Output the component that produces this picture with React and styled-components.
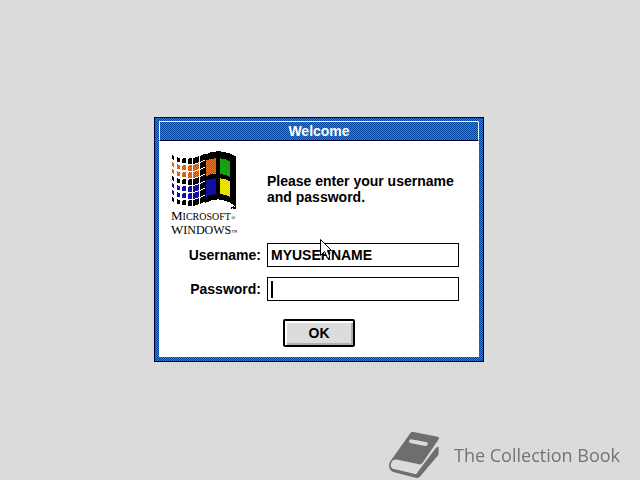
import React, { useState } from 'react';
import styled, { createGlobalStyle } from 'styled-components';

// columns of the flag's dotted tail: left edge, width, top edge, block height, slant
const tail = [
  { x: 20, w: 7, y: 21, h: 12, slant: 3 },
  { x: 36, w: 9, y: 28, h: 13, slant: 2 },
  { x: 52, w: 12, y: 32, h: 14, slant: -2 },
  { x: 68, w: 14, y: 33, h: 17, slant: -4 },
  { x: 85, w: 16, y: 30, h: 18, slant: -5 },
  { x: 104, w: 17, y: 24, h: 18, slant: -7 },
];

const tailRows = ['#000', 'orange', 'orange', '#000', 'blue', 'blue', '#000'];

const tailFill = (row, column) => {
  const color = tailRows[row];
  if (color === '#000' || column === 5) return '#000';
  return color === 'orange' ? 'url(#flag-orange)' : '#1010a0';
};

const WindowsFlag = () => (
  <FlagSvg viewBox="18 9 204 174" aria-hidden="true">
    <defs>
      <pattern id="flag-orange" width="6" height="6" patternUnits="userSpaceOnUse">
        <rect width="6" height="6" fill="#e87830" />
        <path fill="#c84c00" d="M0 0h3v3h-3zM3 3h3v3h-3z" />
      </pattern>
      <pattern id="flag-yellow" width="6" height="6" patternUnits="userSpaceOnUse">
        <rect width="6" height="6" fill="#f8f000" />
        <path fill="#d8c820" d="M0 0h3v3h-3zM3 3h3v3h-3z" />
      </pattern>
    </defs>
    {tail.map((col, i) =>
      tailRows.map((_, row) => (
        <path
          key={`${i}-${row}`}
          fill={tailFill(row, i)}
          d={`M${col.x} ${col.y + row * 21}l${col.w} ${col.slant}v${col.h}l${-col.w} ${-col.slant}z`}
        />
      ))
    )}
    <path d="M121 19C137 10 160 8 176 12C190 14 202 19 213 25V176C202 166 189 160 176 157C156 151 138 155 121 165Z" />
    <path fill="url(#flag-orange)" d="M122 38C132 33 142 31 152 31V78C141 77 132 80 122 85Z" />
    <path fill="#14a010" d="M164 31C176 32 186 35 196 41V87C186 81 176 78 164 78Z" />
    <path fill="#1010a0" d="M122 98C132 92 142 91 152 91V139C141 139 132 142 122 147Z" />
    <path fill="url(#flag-yellow)" d="M164 91C176 92 186 95 196 101V147C186 141 176 139 164 138Z" />
    <path fill="none" stroke="#000" strokeWidth="3" d="M197 178h6M200 178v5M206 183v-6l3 3l3 -3v6" />
  </FlagSvg>
);

const BookIcon = () => (
  <BookSvg viewBox="24 18 156 144" aria-hidden="true">
    <path
      fill="#6e6e6e"
      fillRule="evenodd"
      d="M93 22Q96 19 101 21L173 35Q180 37 176 43L129 112Q125 119 117 118L53 104Q38 102 34 113C30 123 33 129 42 132L108 148L167 70Q171 64 176 66V82Q177 87 173 92L121 154Q117 160 109 159L43 142C29 138 24 127 29 112ZM93 43Q86 44 87 50Q88 54 94 55L135 63Q143 63 144 57Q144 52 138 51Z"
    />
  </BookSvg>
);

const App = () => {
  const [username, setUsername] = useState('MYUSERNAME');
  const [password, setPassword] = useState('');

  return (
    <Desktop>
      <GlobalStyle />
      <Dialog role="dialog" aria-labelledby="dialog-title">
        <TitleBar id="dialog-title">Welcome</TitleBar>
        <LoginForm onSubmit={(e) => e.preventDefault()}>
          <Brand>
            <WindowsFlag />
            <BrandLine>MICROSOFT<Mark>®</Mark></BrandLine>
            <BrandLine $large>WINDOWS<Mark>™</Mark></BrandLine>
          </Brand>
          <Message>Please enter your username and password.</Message>

          <Label htmlFor="username">Username:</Label>
          <Field>
            <Input
              id="username"
              value={username}
              onChange={(e) => setUsername(e.target.value)}
            />
            <Pointer viewBox="0 0 12 20" aria-hidden="true">
              <path d="M.5 .5V16.500L4.500 12.500L7.500 19H9.500V17L7.500 11.500H11.500Z" fill="#fff" stroke="#000" />
            </Pointer>
          </Field>

          <Label htmlFor="password">Password:</Label>
          <Field>
            <Input
              id="password"
              type="password"
              value={password}
              onChange={(e) => setPassword(e.target.value)}
            />
            {password === '' && <Caret />}
          </Field>

          <Actions>
            <Button type="submit">OK</Button>
          </Actions>
        </LoginForm>
      </Dialog>
      <Watermark>
        <BookIcon />
        The Collection Book
      </Watermark>
    </Desktop>
  );
};

const GlobalStyle = createGlobalStyle`
  * {
    box-sizing: border-box;
  }

  body {
    margin: 0;
    background: #dbdbdb;
    color: #000;
    font: bold 14px/16px 'Liberation Sans', Arial, sans-serif;
  }
`;

const Desktop = styled.main`
  display: flex;
  align-items: center;
  justify-content: center;
  min-height: 100vh;
  padding: 0 2px 2px 0;
`;

const Dialog = styled.section`
  width: 100%;
  max-width: 330px;
  padding: 3px 4px 4px;
  border: 1px solid #000030;
  background: repeating-conic-gradient(#0044a0 0 25%, #2a88d0 0 50%) 0 0 / 2px 2px;
`;

const TitleBar = styled.h1`
  margin: 0;
  height: 20px;
  border: 1px solid #e0f8ff;
  border-bottom-color: #000030;
  color: #fff;
  font-size: 14px;
  line-height: 18px;
  text-align: center;
`;

const LoginForm = styled.form`
  display: grid;
  grid-template-columns: 102px 1fr;
  gap: 10px 6px;
  padding: 10px 20px 10px 0;
  background: #fff;
`;

const Brand = styled.div`
  height: 82px;
  padding-left: 12px;
  font-family: 'Liberation Serif', 'Times New Roman', serif;
  font-weight: normal;
`;

const FlagSvg = styled.svg`
  display: block;
  width: 68px;
  height: 58px;
  shape-rendering: crispEdges;
`;

const BrandLine = styled.div`
  height: 14px;
  font-size: ${({ $large }) => ($large ? '12px' : '10px')};
  line-height: 14px;
  white-space: nowrap;

  &::first-letter {
    font-size: 13px;
  }
`;

const Mark = styled.span`
  font-size: 6px;
  line-height: 6px;
`;

const Message = styled.p`
  margin: 0;
  padding-top: 22px;
`;

const Label = styled.label`
  align-self: center;
  text-align: right;
`;

const Field = styled.div`
  position: relative;
`;

const Input = styled.input`
  display: block;
  width: 100%;
  height: 24px;
  padding: 0 3px;
  border: 1px solid #000;
  border-radius: 0;
  outline: none;
  background: #fff;
  color: inherit;
  font: inherit;
`;

const Caret = styled.span`
  position: absolute;
  top: 4px;
  left: 4px;
  width: 2px;
  height: 17px;
  background: #000;
  pointer-events: none;
`;

const Pointer = styled.svg`
  position: absolute;
  top: -4px;
  left: 53px;
  width: 12px;
  height: 20px;
  pointer-events: none;
`;

const Actions = styled.div`
  display: flex;
  grid-column: 1 / -1;
  justify-content: center;
  padding: 8px 0 0 20px;
`;

const Button = styled.button`
  width: 72px;
  height: 28px;
  padding: 0;
  border: 2px solid #000;
  border-radius: 2px;
  background: #dcdcdc;
  box-shadow: inset 2px 2px #fff, inset -2px -2px #b0b0b0;
  color: inherit;
  font: inherit;
`;

const Watermark = styled.footer`
  position: fixed;
  right: 20px;
  bottom: 1px;
  display: flex;
  align-items: center;
  gap: 14px;
  color: #747474;
  font: 18px/24px 'Open Sans', 'Noto Sans', sans-serif;
`;

const BookSvg = styled.svg`
  width: 52px;
  height: 48px;
`;

export default App;
